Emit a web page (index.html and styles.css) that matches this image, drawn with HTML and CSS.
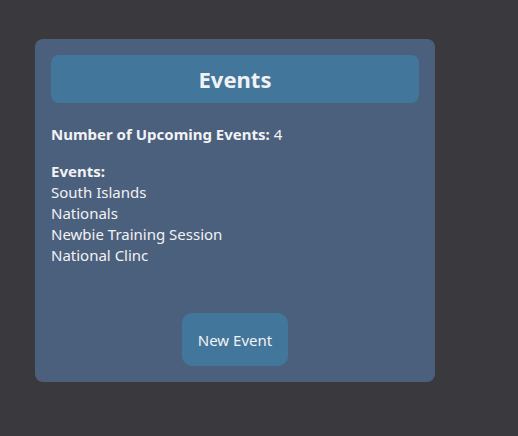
FILE: index.html
```html
<!DOCTYPE html>
<html>
<head>
<meta charset="utf-8">
<link rel="stylesheet" href="styles.css">
</head>
<body>
<div class="card">
  <h2 class="card-title">Events</h2>
  <p class="count"><b>Number of Upcoming Events:</b> 4</p>
  <div class="list">
    <b>Events:</b>
    <div>South Islands</div>
    <div>Nationals</div>
    <div>Newbie Training Session</div>
    <div>National Clinc</div>
  </div>
  <div class="actions">
    <button class="btn">New Event</button>
  </div>
</div>
</body>
</html>
```
FILE: styles.css
```css
html, body {
  margin: 0;
  height: 100%;
}
body {
  background: #3a393e;
  padding: 39px 0 0 35px;
  box-sizing: border-box;
  font-family: "Segoe UI", "Noto Sans", "Open Sans", sans-serif;
  color: #f2f2f4;
  font-size: 15px;
}
.card {
  width: 400px;
  height: 343px;
  box-sizing: border-box;
  background: #4b607c;
  border-radius: 8px;
  padding: 16px;
  display: flex;
  flex-direction: column;
}
.card-title {
  margin: 0;
  height: 48px;
  background: #42769b;
  border-radius: 8px;
  display: flex;
  align-items: center;
  justify-content: center;
  font-size: 22px;
  font-weight: bold;
}
.count {
  margin: 21px 0 0;
  line-height: 21px;
}
.list {
  margin-top: 16px;
  line-height: 21px;
}
.list b {
  display: block;
}
.actions {
  margin-top: auto;
  display: flex;
  justify-content: center;
}
.btn {
  width: 106px;
  height: 53px;
  border: none;
  border-radius: 10px;
  background: #42769b;
  color: #f2f2f4;
  font-family: inherit;
  font-size: 15px;
}
```
